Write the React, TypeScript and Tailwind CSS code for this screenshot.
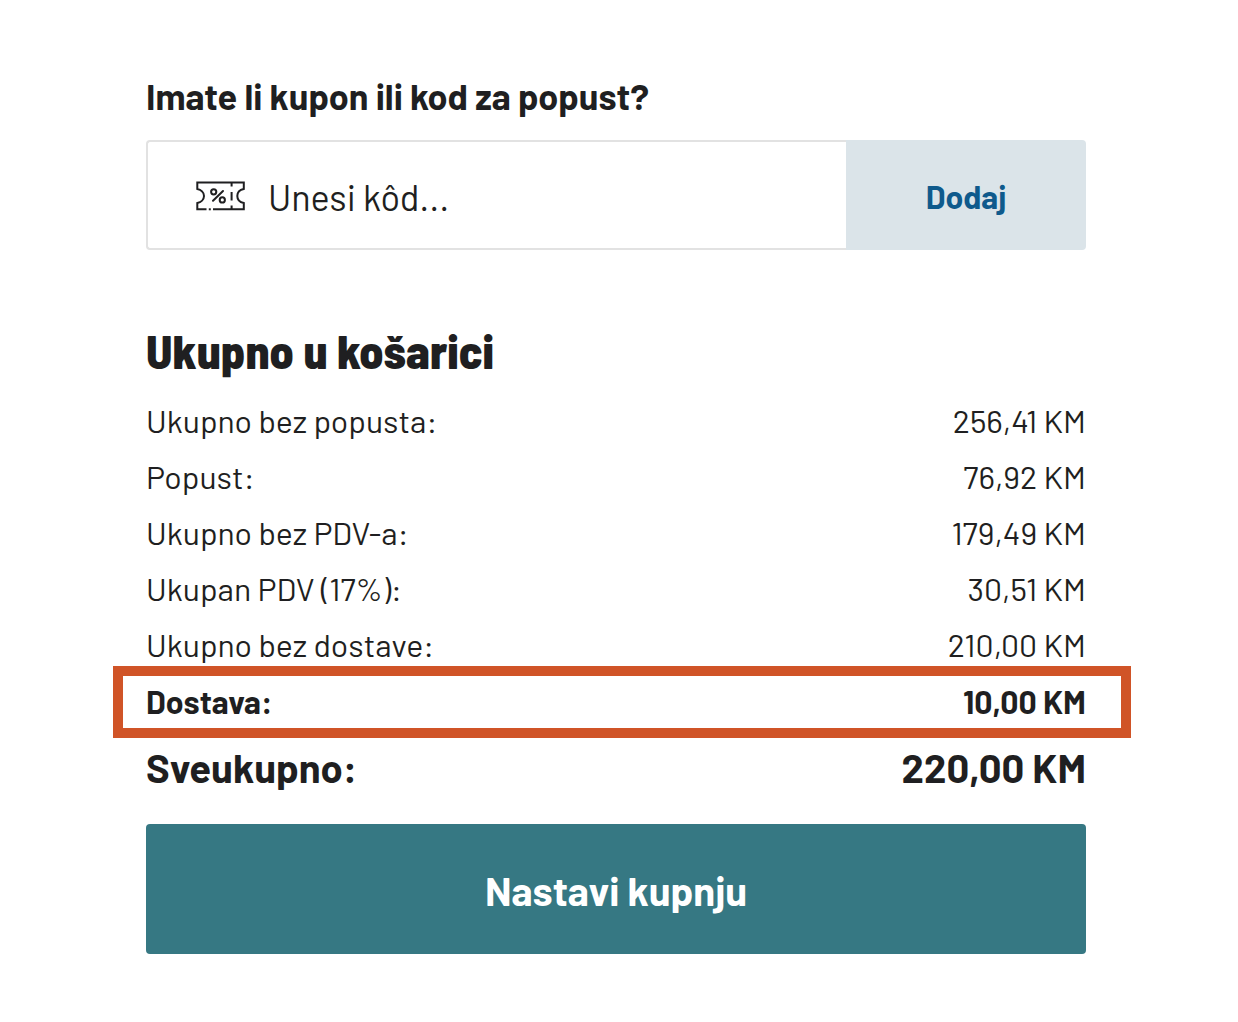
import React, { useState } from 'react';

interface SummaryRow {
  label: string;
  value: string;
}

const rows: SummaryRow[] = [
  { label: 'Ukupno bez popusta:', value: '256,41 KM' },
  { label: 'Popust:', value: '76,92 KM' },
  { label: 'Ukupno bez PDV-a:', value: '179,49 KM' },
  { label: 'Ukupan PDV (17%):', value: '30,51 KM' },
  { label: 'Ukupno bez dostave:', value: '210,00 KM' }
];

const CouponIcon: React.FC = () => (
  <svg
    width="50"
    height="30"
    viewBox="0 0 50 30"
    fill="none"
    stroke="currentColor"
    strokeWidth="2"
    className="shrink-0"
    aria-hidden="true"
  >
    <path d="M10.5 28.3H1.3V22C5 21.2 8 18.5 8 15S5 8.8 1.3 8V1.5H47.8V8C44.1 8.8 41.3 11.5 41.3 15S44.1 21.2 47.8 22V28.3H17" />
    <path d="M12.8 28.3H14.8" />
    <path d="M35.6 2V5.5M35.6 11V19.5M35.6 24.5V28" />
    <circle cx="17.7" cy="10.8" r="2.6" />
    <circle cx="26.3" cy="18.9" r="2.6" />
    <path d="M27 10L17 19.8" strokeLinecap="round" />
  </svg>
);

const CouponForm: React.FC = () => {
  const [code, setCode] = useState('');

  const handleSubmit = (e: React.FormEvent) => {
    e.preventDefault();
    setCode('');
  };

  return (
    <form onSubmit={handleSubmit}>
      <label htmlFor="coupon" className="block text-4xl leading-10 font-bold">
        Imate li kupon ili kod za popust?
      </label>
      <div className="mt-6 flex h-[110px]">
        <div className="flex min-w-0 flex-1 items-center gap-[22px] rounded-l border-2 border-r-0 border-[#e2e2e2] pt-0.5 pl-12">
          <CouponIcon />
          <input
            id="coupon"
            type="text"
            value={code}
            onChange={(e) => setCode(e.target.value)}
            placeholder="Unesi kôd..."
            className="h-full min-w-0 flex-1 text-4xl outline-none placeholder:text-[#1f1f21] placeholder:opacity-100"
          />
        </div>
        <button type="submit" className="w-60 rounded-r bg-[#dbe4e9] pt-0.5 text-[32px] font-bold text-[#0f5a8c]">
          Dodaj
        </button>
      </div>
    </form>
  );
};

const App: React.FC = () => {
  return (
    <main className="bg-white pt-[76px] pr-[152px] pb-16 pl-[146px] font-['Barlow','Roboto',sans-serif] text-[#1f1f21]">
      <CouponForm />

      <section className="mt-[72px]">
        <h2 className="font-['Barlow_Semi_Condensed','Barlow',sans-serif] text-5xl leading-14 font-extrabold">
          Ukupno u košarici
        </h2>
        <dl className="mt-[14px] text-[32px] leading-14">
          {rows.map((row) => (
            <div key={row.label} className="flex justify-between">
              <dt>{row.label}</dt>
              <dd>{row.value}</dd>
            </div>
          ))}
          {/* Frame is wider and taller than the row it marks */}
          <div className="-mt-[6px] -mr-[45px] -mb-2 -ml-[33px] flex h-[72px] items-center justify-between border-10 border-[#d05427] pr-[35px] pb-0.5 pl-[23px] font-bold">
            <dt>Dostava:</dt>
            <dd>10,00 KM</dd>
          </div>
          <div className="flex h-[74px] items-center justify-between text-[40px] font-bold">
            <dt>Sveukupno:</dt>
            <dd>220,00 KM</dd>
          </div>
        </dl>
        <button
          type="button"
          className="mt-5 h-[130px] w-full rounded bg-[#367883] pt-0.5 text-[40px] font-bold text-white"
        >
          Nastavi kupnju
        </button>
      </section>
    </main>
  );
};

export default App;
